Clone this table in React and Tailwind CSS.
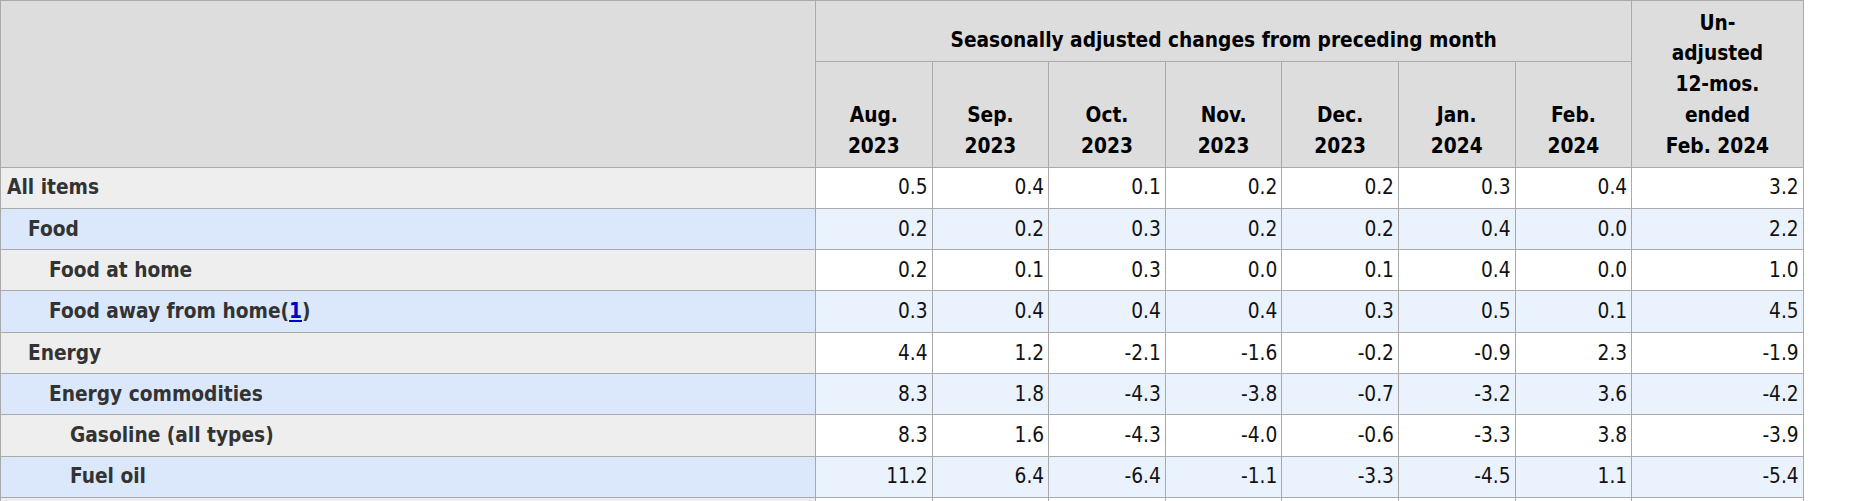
import React from "react";

const months = [
  ["Aug.", "2023"],
  ["Sep.", "2023"],
  ["Oct.", "2023"],
  ["Nov.", "2023"],
  ["Dec.", "2023"],
  ["Jan.", "2024"],
  ["Feb.", "2024"],
];

const rows = [
  { label: "All items", level: 0, v: ["0.5", "0.4", "0.1", "0.2", "0.2", "0.3", "0.4", "3.2"] },
  { label: "Food", level: 1, v: ["0.2", "0.2", "0.3", "0.2", "0.2", "0.4", "0.0", "2.2"] },
  { label: "Food at home", level: 2, v: ["0.2", "0.1", "0.3", "0.0", "0.1", "0.4", "0.0", "1.0"] },
  { label: "Food away from home", note: "1", level: 2, v: ["0.3", "0.4", "0.4", "0.4", "0.3", "0.5", "0.1", "4.5"] },
  { label: "Energy", level: 1, v: ["4.4", "1.2", "-2.1", "-1.6", "-0.2", "-0.9", "2.3", "-1.9"] },
  { label: "Energy commodities", level: 2, v: ["8.3", "1.8", "-4.3", "-3.8", "-0.7", "-3.2", "3.6", "-4.2"] },
  { label: "Gasoline (all types)", level: 3, v: ["8.3", "1.6", "-4.3", "-4.0", "-0.6", "-3.3", "3.8", "-3.9"] },
  { label: "Fuel oil", level: 3, v: ["11.2", "6.4", "-6.4", "-1.1", "-3.3", "-4.5", "1.1", "-5.4"] },
  { label: "", level: 2, v: ["", "", "", "", "", "", "", ""] },
];

const indent = ["pl-[6px]", "pl-[27px]", "pl-[48px]", "pl-[69px]"];

export default function App() {
  return (
    <div className="bg-white w-[1849px] h-[501px] overflow-hidden" style={{ fontFamily: '"DejaVu Sans Condensed", "DejaVu Sans", sans-serif' }}>
      <table className="border-collapse table-fixed w-[1803px] text-[20.7px] leading-[30.8px]">
        <colgroup>
          <col className="w-[815px]" />
          {months.map((m, i) => (
            <col key={i} className="w-[116.6px]" />
          ))}
          <col className="w-[171.5px]" />
        </colgroup>
        <thead>
          <tr className="h-[61.2px]">
            <th rowSpan={2} className="bg-[#dddddd] border border-[#aaaaaa]"></th>
            <th colSpan={7} className="bg-[#dddddd] border border-[#aaaaaa] align-bottom font-bold text-black px-[5px] pb-[5px]">
              Seasonally adjusted changes from preceding month
            </th>
            <th rowSpan={2} className="bg-[#dddddd] border border-[#aaaaaa] align-bottom font-bold text-black px-[5px] pb-[5px] text-center">
              Un-<br />adjusted<br />12-mos.<br />ended<br />Feb. 2024
            </th>
          </tr>
          <tr className="h-[105.4px]">
            {months.map((m, i) => (
              <th key={i} className="bg-[#dddddd] border border-[#aaaaaa] align-bottom font-bold text-black px-[4px] pb-[5px] text-center">
                {m[0]}
                <br />
                {m[1]}
              </th>
            ))}
          </tr>
        </thead>
        <tbody>
          {rows.map((r, i) => {
            const odd = i % 2 === 0;
            return (
              <tr key={i} className="h-[41.3px]">
                <th
                  className={`${odd ? "bg-[#eeeeee]" : "bg-[#dbe8fc]"} border border-[#aaaaaa] text-left font-bold text-[#333333] ${indent[r.level]} pr-[4px] align-middle whitespace-nowrap`}
                >
                  {r.label}
                  {r.note && (
                    <>
                      (<a href="#" className="text-[#0000cc] underline">{r.note}</a>)
                    </>
                  )}
                </th>
                {r.v.map((v, j) => (
                  <td
                    key={j}
                    className={`${odd ? "bg-white" : "bg-[#eaf2fe]"} border border-[#aaaaaa] text-right text-[#111111] pr-[4px] pl-[4px] align-middle`}
                  >
                    {v}
                  </td>
                ))}
              </tr>
            );
          })}
        </tbody>
      </table>
    </div>
  );
}
